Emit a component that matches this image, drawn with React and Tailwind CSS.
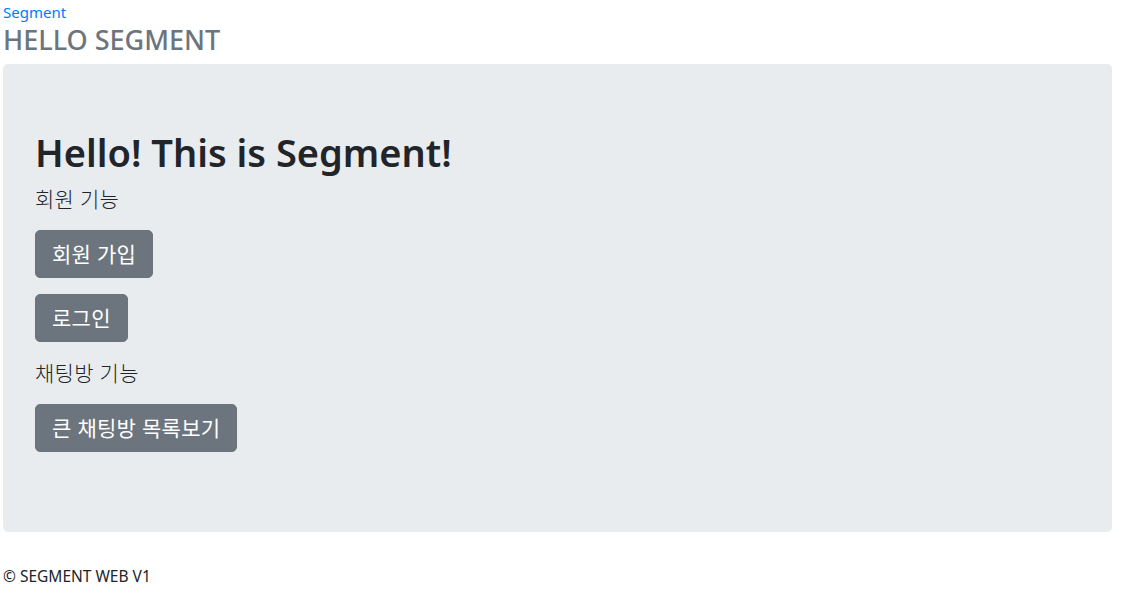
const font = { fontFamily: '"Noto Sans", "Noto Sans CJK KR", sans-serif' };

const Btn = ({ children }) => (
  <div className="mb-4">
    <button className="bg-[#6c757d] text-white text-[21px] leading-[30px] tracking-[0.3px] px-4 py-[8px] rounded-[5px] border border-[#6c757d]">
      {children}
    </button>
  </div>
);

export default function App() {
  return (
    <div className="min-h-screen bg-white text-[#212529] pl-[3px] pr-[9px]" style={font}>
      <a href="#" className="block text-[15px] leading-[24px] text-[#007bff]">Segment</a>
      <h3 className="text-[27px] leading-[32px] font-medium text-[#6c757d] mb-2">HELLO SEGMENT</h3>

      <div className="bg-[#e9ecef] rounded-[5px] px-8 py-16">
        <h1 className="text-[38px] leading-[48px] font-semibold mb-2">Hello! This is Segment!</h1>
        <p className="text-[21px] leading-[30px] font-light tracking-[0.3px] mb-4">회원 기능</p>
        <Btn>회원 가입</Btn>
        <Btn>로그인</Btn>
        <p className="text-[21px] leading-[30px] font-light tracking-[0.3px] mb-4">채팅방 기능</p>
        <Btn>큰 채팅방 목록보기</Btn>
      </div>

      <footer className="mt-8 text-[15.5px] leading-[24px]">© SEGMENT WEB V1</footer>
    </div>
  );
}
